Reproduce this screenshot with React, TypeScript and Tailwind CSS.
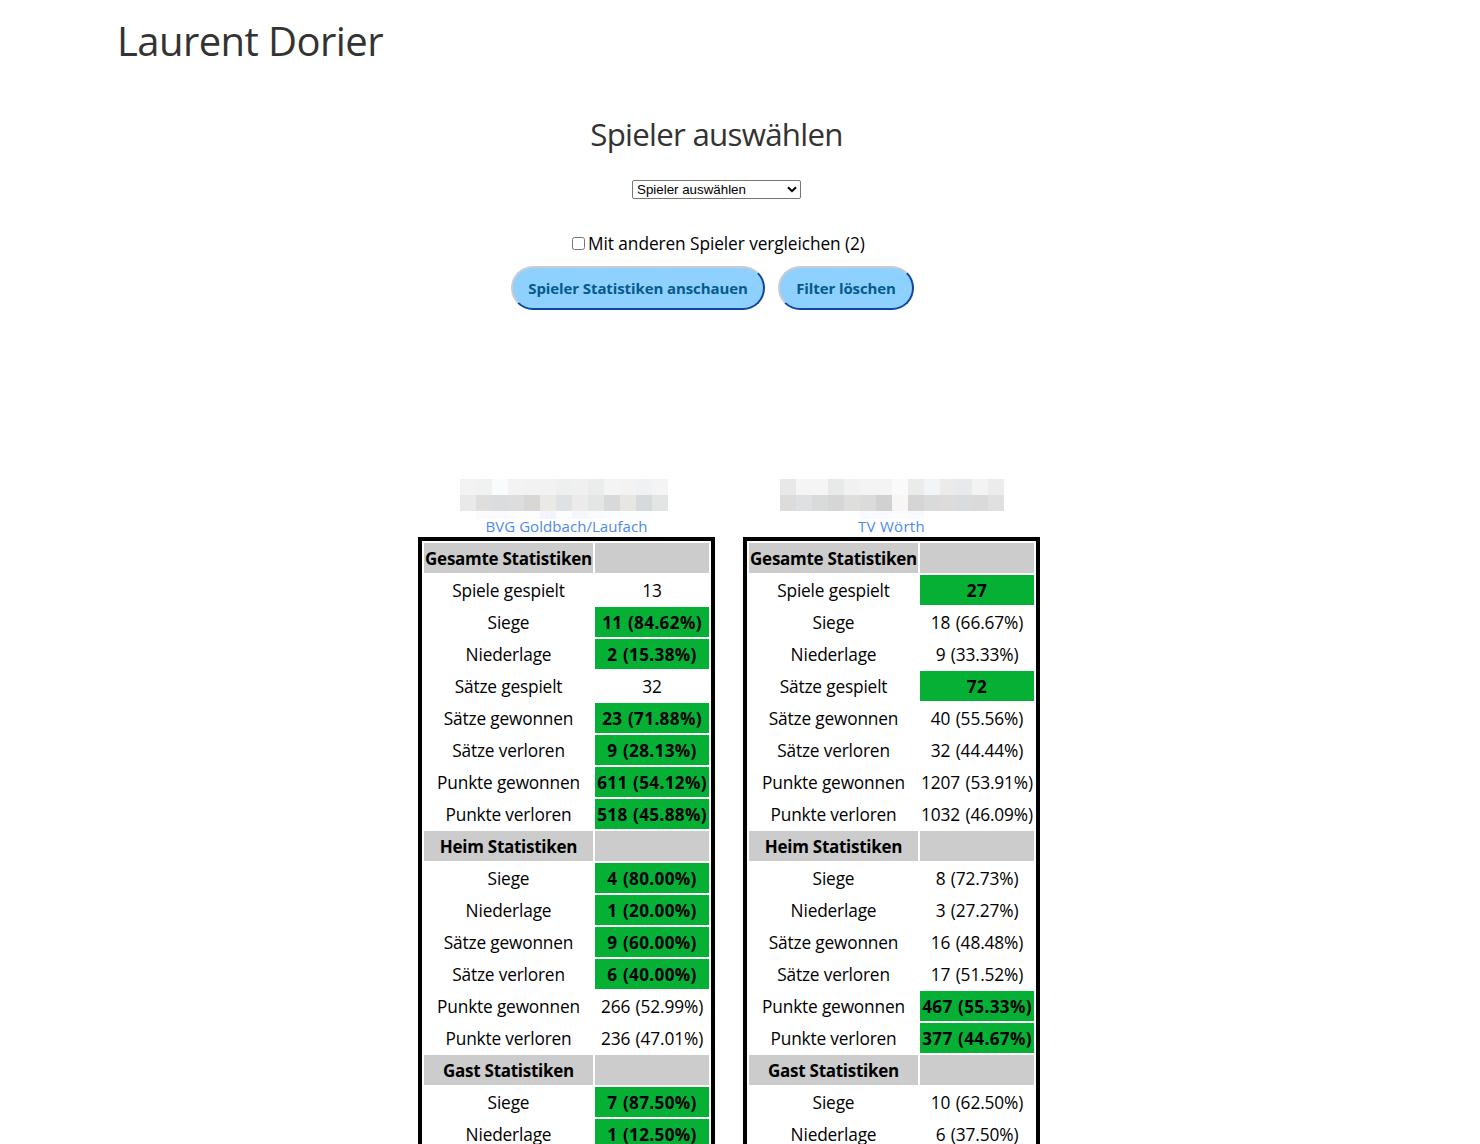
type Row = { label: string; head?: boolean; a?: string; b?: string; win?: "a" | "b" };

const rows: Row[] = [
  { label: "Gesamte Statistiken", head: true },
  { label: "Spiele gespielt", a: "13", b: "27", win: "b" },
  { label: "Siege", a: "11 (84.62%)", b: "18 (66.67%)", win: "a" },
  { label: "Niederlage", a: "2 (15.38%)", b: "9 (33.33%)", win: "a" },
  { label: "Sätze gespielt", a: "32", b: "72", win: "b" },
  { label: "Sätze gewonnen", a: "23 (71.88%)", b: "40 (55.56%)", win: "a" },
  { label: "Sätze verloren", a: "9 (28.13%)", b: "32 (44.44%)", win: "a" },
  { label: "Punkte gewonnen", a: "611 (54.12%)", b: "1207 (53.91%)", win: "a" },
  { label: "Punkte verloren", a: "518 (45.88%)", b: "1032 (46.09%)", win: "a" },
  { label: "Heim Statistiken", head: true },
  { label: "Siege", a: "4 (80.00%)", b: "8 (72.73%)", win: "a" },
  { label: "Niederlage", a: "1 (20.00%)", b: "3 (27.27%)", win: "a" },
  { label: "Sätze gewonnen", a: "9 (60.00%)", b: "16 (48.48%)", win: "a" },
  { label: "Sätze verloren", a: "6 (40.00%)", b: "17 (51.52%)", win: "a" },
  { label: "Punkte gewonnen", a: "266 (52.99%)", b: "467 (55.33%)", win: "b" },
  { label: "Punkte verloren", a: "236 (47.01%)", b: "377 (44.67%)", win: "b" },
  { label: "Gast Statistiken", head: true },
  { label: "Siege", a: "7 (87.50%)", b: "10 (62.50%)", win: "a" },
  { label: "Niederlage", a: "1 (12.50%)", b: "6 (37.50%)", win: "a" },
];

const mosaicA = [
  ["#f3f3f3", "#f0f1f1", "#f9fcfc", "#f3f3f3", "#f2f2f2", "#f2f2f2", "#eeefef", "#f0f0f0", "#ebecec", "#f4f4f4", "#f4f3f1", "#eff1f3", "#f4f4f4"],
  ["#e9e9e9", "#e0dedc", "#dbdcde", "#dddddd", "#d9d7d6", "#ebe9e6", "#dfe2e5", "#ecebe9", "#e4e5e5", "#d8d9da", "#e8e6e3", "#d7dadc", "#e3e4e4"],
  ["#ffffff", "#fafbff", "#fafbff", "#fcfdff", "#fdfdff", "#f2f5ff", "#fcfdff", "#f5f8ff", "#fafbff", "#fcfdff", "#fcfdff", "#fcfdff", "#ffffff"],
];
const mosaicB = [
  ["#e8e8e8", "#f5f5f5", "#f5f5f5", "#e8e9e9", "#f1f1f1", "#f4f4f4", "#f4f4f4", "#fbfafa", "#eaebeb", "#f2f5f7", "#edebe9", "#e7e9ec", "#f3f3f3", "#ececec"],
  ["#dddcda", "#dee0e2", "#d9dada", "#d6d6d6", "#dededd", "#dbdbda", "#d2d1d1", "#f8f6f5", "#d5d5d5", "#d9dada", "#dedcda", "#d9dcdf", "#dadada", "#e0e0e0"],
  ["#ffffff", "#ffffff", "#ffffff", "#ffffff", "#ffffff", "#f8faff", "#f8faff", "#fbfcff", "#f8faff", "#ffffff", "#ffffff", "#ffffff", "#ffffff", "#ffffff"],
];

function Mosaic({ cells }: { cells: string[][] }) {
  return (
    <div className="flex h-10 flex-col">
      {cells.map((line, i) => (
        <div key={i} className="flex">
          {line.map((color, j) => (
            <span key={j} className={i === 2 ? "h-2 w-4" : "h-4 w-4"} style={{ backgroundColor: color }} />
          ))}
        </div>
      ))}
    </div>
  );
}

function PlayerTable({ side }: { side: "a" | "b" }) {
  return (
    <div className="grid w-[297px] auto-rows-[30px] grid-cols-[169px_114px] gap-0.5 border-4 border-black p-0.5 text-center text-[17.3px] leading-[32px]">
      {rows.map((row, i) => {
        if (row.head) {
          return (
            <div key={i} className="contents text-[17px] font-bold">
              <div className="bg-[#cccccc] tracking-[-0.27px] whitespace-nowrap">{row.label}</div>
              <div className="bg-[#cccccc]" />
            </div>
          );
        }
        const best = row.win === side;
        return (
          <div key={i} className="contents">
            <div className="tracking-[-0.17px] whitespace-nowrap">{row.label}</div>
            <div
              className={
                best
                  ? "bg-[#06b035] text-[17.1px] font-bold tracking-[0.36px] whitespace-nowrap [word-spacing:0.7px]"
                  : "tracking-[-0.12px] whitespace-nowrap [word-spacing:1px]"
              }
            >
              {row[side]}
            </div>
          </div>
        );
      })}
    </div>
  );
}

const buttonClass =
  "h-11 rounded-[22px] border-2 border-t-[#cccccc] border-l-[#cccccc] border-r-[#0d47a1] border-b-[#0d47a1] bg-[#8fd1fe] text-[15px] font-bold text-[#055a8c] whitespace-nowrap";

export default function App() {
  return (
    <div className="h-[1144px] w-[1480px] overflow-hidden bg-white font-['Open_Sans','Noto_Sans',sans-serif] text-black">
      <h1 className="ml-[117px] h-[83px] pt-[14px] text-[40px] leading-[54px] tracking-[-0.57px] text-[#333333]">Laurent Dorier</h1>
      <div className="flex w-[1433px] flex-col items-center">
        <h2 className="mt-[27px] h-[48px] text-[31.3px] leading-[48px] tracking-[-0.75px] text-[#333333]">Spieler auswählen</h2>
        <div className="relative mt-[22px] h-[19px] w-[169px]">
          <select className="block h-[19px] w-[169px] appearance-none rounded-[2px] border border-[#767676] bg-white pl-1 font-['Liberation_Sans',Arial,sans-serif] text-[13.333px] leading-[17px] text-black">
            <option>Spieler auswählen</option>
          </select>
          <svg className="pointer-events-none absolute top-[6px] right-[4px]" width="10" height="7" viewBox="0 0 10 7" fill="none">
            <path d="M1 1.2 5 5.2 9 1.2" stroke="#000" strokeWidth="2" />
          </svg>
        </div>
        <label className="mt-[31px] ml-[4px] flex h-[28px] items-center gap-[3px] text-[17.3px] leading-[28px] tracking-[-0.08px]">
          <input type="checkbox" className="mb-px h-[13px] w-[13px]" />
          <span className="whitespace-nowrap">Mit anderen Spieler vergleichen (2)</span>
        </label>
        <div className="mt-[8px] mr-[8px] flex gap-[13px]">
          <button className={`${buttonClass} w-[254px] tracking-[-0.1px]`}>Spieler Statistiken anschauen</button>
          <button className={`${buttonClass} w-[136px] tracking-[-0.1px]`}>Filter löschen</button>
        </div>
      </div>
      <div className="mt-[169px] ml-[418px] flex gap-7">
        <section className="flex w-[297px] flex-col items-center">
          <div className="mr-[5px]"><Mosaic cells={mosaicA} /></div>
          <a className="h-[18px] text-[15px] leading-[14px] tracking-[0.06px] text-[#4d88ee]">BVG Goldbach/Laufach</a>
          <PlayerTable side="a" />
        </section>
        <section className="flex w-[297px] flex-col items-center">
          <div className="ml-[1px]"><Mosaic cells={mosaicB} /></div>
          <a className="h-[18px] text-[15px] leading-[14px] tracking-[0.3px] text-[#4d88ee]">TV Wörth</a>
          <PlayerTable side="b" />
        </section>
      </div>
    </div>
  );
}
